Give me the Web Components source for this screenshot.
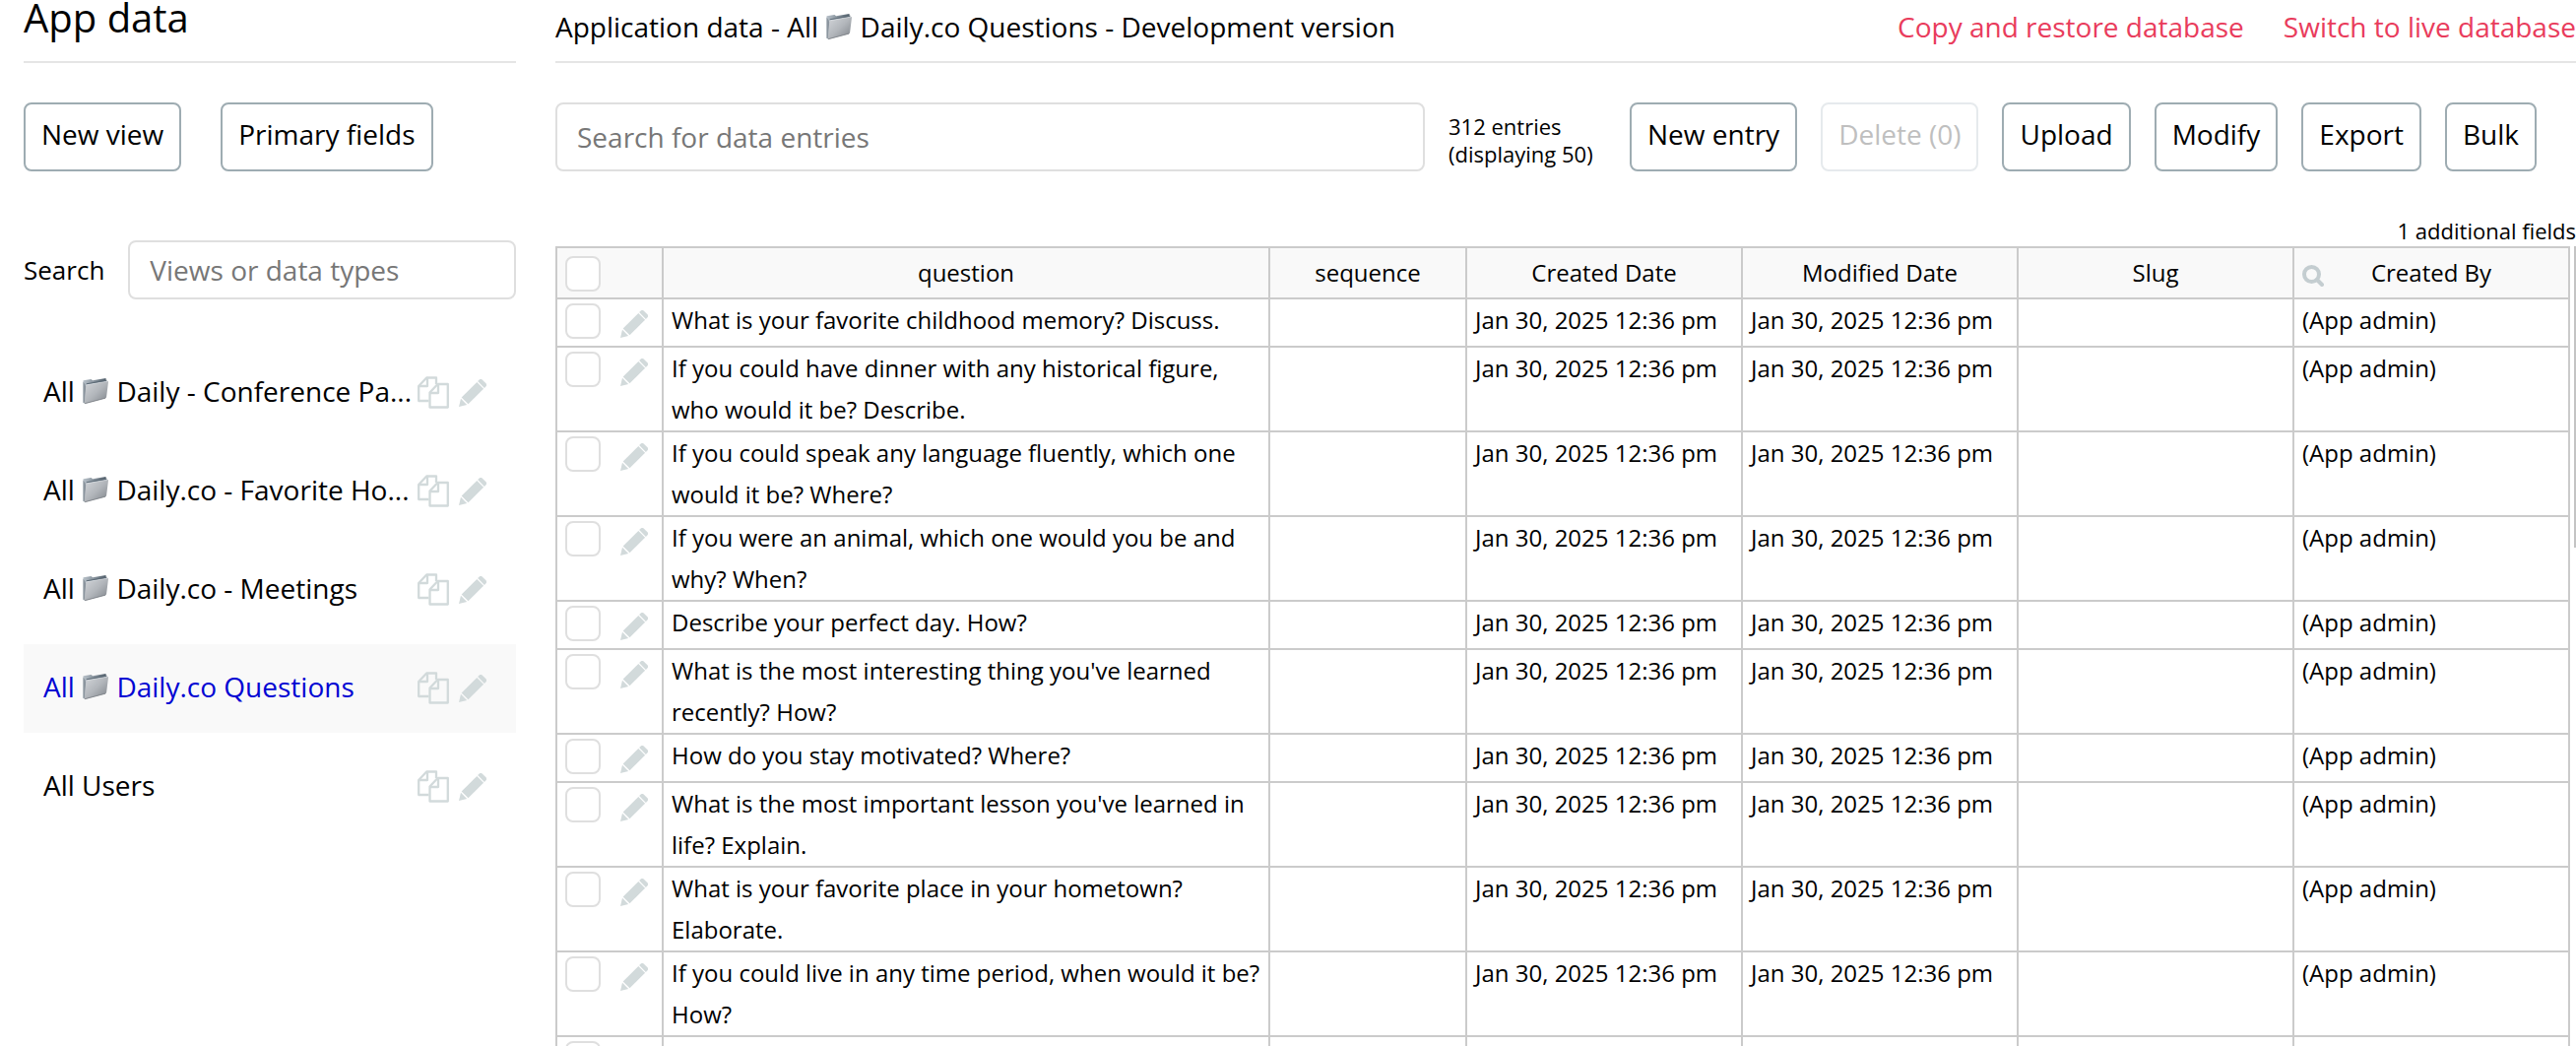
<!DOCTYPE html>
<html lang="en">
<head>
<meta charset="utf-8">
<title>App data</title>
<style>
  body { margin: 0; height: 100vh; overflow: hidden; background: #fff; color: #000; font: 28px/38px "Open Sans", "Noto Sans", sans-serif; }
</style>
</head>
<body>
<app-data></app-data>

<script>
const ICONS = {
  folder: `<svg viewBox="0 0 27 28" width="28" height="28"><defs>
    <linearGradient id="f" x1="0" y1="0" x2="1" y2="1"><stop offset="0" stop-color="#d3d6da"/><stop offset=".5" stop-color="#b2b6bb"/><stop offset="1" stop-color="#7d8288"/></linearGradient>
    <linearGradient id="b" x1="0" y1="0" x2="1" y2="0"><stop offset="0" stop-color="#b9c2ca"/><stop offset="1" stop-color="#4f5d69"/></linearGradient></defs>
    <path d="M1 3.2 9 2l1.6 1.2L24 1l.4 4L3 26.4l-2-.6Z" fill="url(#b)"/>
    <path d="M1 4.5v21.3l1.3.6L4 9Z" fill="#8b959e"/>
    <path d="M4.6 7.6 25.6 4q1-.1.9.8L24.6 20q-.1.9-1 1.2L3.2 26.8q-1 .2-.9-.8L3.8 8.5q.1-.8.8-.9Z" fill="url(#f)"/>
    <path d="M3.8 8.4q.1-.7.8-.8L25.6 4" fill="none" stroke="#dfe4e8" stroke-width=".7"/>
    <path d="M4.200 6.800 25 3.200" fill="none" stroke="#5b6975" stroke-width="1"/>
    <path d="m2.6 26.7 21-5.500" fill="none" stroke="#757a80" stroke-width=".8"/></svg>`,
  copy: `<svg viewBox="0 0 32 33" width="32" height="33" fill="none" stroke="#d2dadb" stroke-width="2.300" stroke-linejoin="round">
    <path d="M11.500 25H1.200V10l8-8.500h9.800V8"/><path d="M10 2v8H1.500"/>
    <path d="M12.500 16.500 20.500 8h10.300v23.500H12.500Z"/><path d="M21 8.500v8.500h-8"/></svg>`,
  pencil: `<svg viewBox="0 0 28 28" width="28" height="28" fill="#d2dadb">
    <path d="M0 28 2 19.800 8.200 26Z"/><path d="M2.700 18.500 18.300 2.900l6.800 6.800L9.500 25.300Z"/><path d="m19.100 2.100 1.400-1.400q1.700-1.600 3.400 0l3.400 3.400q1.600 1.700 0 3.400l-1.400 1.400Z"/></svg>`,
  search: `<svg viewBox="0 0 22 22" width="22" height="22" fill="none" stroke="#c4cdd0"><circle cx="9.500" cy="9.500" r="7.500" stroke-width="4"/><path d="m15 15 5 5" stroke-width="4" stroke-linecap="round"/></svg>`
};

const BASE = `*{box-sizing:border-box} button,input{font:inherit;color:inherit;margin:0}`;

class BaseElement extends HTMLElement {
  mount(css, html) {
    this.attachShadow({ mode: 'open' }).innerHTML = `<style>${BASE}${css}</style>${html}`;
  }
}

customElements.define('ui-icon', class extends BaseElement {
  connectedCallback() {
    this.mount(`:host{display:block} svg{display:block}`, ICONS[this.getAttribute('name')]);
  }
});

customElements.define('folder-icon', class extends BaseElement {
  connectedCallback() {
    this.mount(`:host{display:inline-block;vertical-align:-3px} svg{display:block}`, ICONS.folder);
  }
});

customElements.define('icon-button', class extends BaseElement {
  connectedCallback() {
    this.mount(`:host{display:block} button{display:block;padding:0;border:0;background:none}`,
      `<button type="button" aria-label="${this.getAttribute('label')}"><ui-icon name="${this.getAttribute('icon')}"></ui-icon></button>`);
  }
});

customElements.define('outline-button', class extends BaseElement {
  connectedCallback() {
    this.mount(`:host{display:block;flex:none}
      button{display:block;padding:11px 16px 17px;border:2px solid #9eacb2;border-radius:8px;background:#fff;white-space:nowrap}
      button:disabled{border-color:#e6eaed;color:#bfbfbf}`,
      `<button type="button" ${this.hasAttribute('disabled') ? 'disabled' : ''}><slot></slot></button>`);
  }
});

customElements.define('search-field', class extends BaseElement {
  connectedCallback() {
    const label = this.getAttribute('label');
    const text = this.getAttribute('placeholder');
    this.mount(`:host{display:flex;align-items:center;gap:24px;min-width:0}
      label{font-size:26px}
      input{flex:1;min-width:0;width:100%;height:var(--field-height,60px);padding:0 20px;border:2px solid #dfdfdf;border-radius:8px;background:#fff;outline:0}
      input::placeholder{color:#777;opacity:1}`,
      `${label ? `<label for="q">${label}</label>` : ''}<input id="q" type="text" placeholder="${text}" ${label ? '' : `aria-label="${text}"`}>`);
  }
});

customElements.define('check-box', class extends BaseElement {
  connectedCallback() {
    this.mount(`:host{display:block}
      input{appearance:none;display:block;width:36px;height:36px;border:2px solid #dfdfdf;border-radius:8px;background:#fff}`,
      `<input type="checkbox" aria-label="${this.getAttribute('label')}">`);
  }
});

customElements.define('view-item', class extends BaseElement {
  connectedCallback() {
    this.mount(`:host{display:flex;align-items:flex-start;padding:24px 30px 28px 20px}
      :host([selected]){background:#f9f9f9}
      a{flex:1;min-width:0;color:inherit;text-decoration:none;white-space:nowrap}
      :host([selected]) a{color:#0205d3}
      div{display:flex;align-items:center;gap:10px;padding-top:4px}`,
      `<a href="#"><slot></slot></a><div><icon-button icon="copy" label="Duplicate view"></icon-button><icon-button icon="pencil" label="Edit view"></icon-button></div>`);
  }
});

customElements.define('view-sidebar', class extends BaseElement {
  connectedCallback() {
    this.mount(`:host{display:block;flex:none;width:500px}
      header{height:64px;border-bottom:2px solid #e5e5e5}
      h1{margin:0;font-size:40px;line-height:36px;font-weight:400}
      .buttons{display:flex;gap:40px;padding:40px 0 70px}
      nav{display:flex;flex-direction:column;gap:10px;padding-top:50px}`,
      `<header><h1>App data</h1></header>
      <div class="buttons"><outline-button>New view</outline-button><outline-button>Primary fields</outline-button></div>
      <search-field label="Search" placeholder="Views or data types"></search-field>
      <nav>
        <view-item>All <folder-icon></folder-icon> Daily - Conference Pa...</view-item>
        <view-item>All <folder-icon></folder-icon> Daily.co - Favorite Ho...</view-item>
        <view-item>All <folder-icon></folder-icon> Daily.co - Meetings</view-item>
        <view-item selected>All <folder-icon></folder-icon> Daily.co Questions</view-item>
        <view-item>All Users</view-item>
      </nav>`);
  }
});

const QUESTIONS = [
  "What is your favorite childhood memory? Discuss.",
  "If you could have dinner with any historical figure, who would it be? Describe.",
  "If you could speak any language fluently, which one would it be? Where?",
  "If you were an animal, which one would you be and why? When?",
  "Describe your perfect day. How?",
  "What is the most interesting thing you've learned recently? How?",
  "How do you stay motivated? Where?",
  "What is the most important lesson you've learned in life? Explain.",
  "What is your favorite place in your hometown? Elaborate.",
  "If you could live in any time period, when would it be? How?"
];
const DATE = 'Jan 30, 2025 12:36 pm';

customElements.define('entry-table', class extends BaseElement {
  connectedCallback() {
    const row = q => `<tr>
      <td class="tools"><div><check-box label="Select entry"></check-box><icon-button icon="pencil" label="Edit entry"></icon-button></div></td>
      <td>${q}</td><td></td><td>${q && DATE}</td><td>${q && DATE}</td><td></td><td>${q && '(App admin)'}</td></tr>`;
    this.mount(`:host{display:flex;gap:4px;font-size:24px;line-height:42px}
      table{flex:1;width:100%;table-layout:fixed;border-collapse:collapse}
      .c-tools{width:108px}.c-seq{width:200px}.c-std{width:280px}
      th,td{border:2px solid #cbcbcb;padding:0 8px;vertical-align:top;text-align:left}
      th{padding:0 8px;background:#f9f9f9;font-weight:400;line-height:50px;text-align:center}
      td.tools div{display:flex;gap:20px;padding:4px 0 7px}
      td.tools icon-button{padding-top:7px}
      td.tools div{height:47px}
      th.tools{padding:8px 8px 0}
      .find{display:grid;grid-template-columns:1fr auto 1fr;align-items:center}
      .find ui-icon{justify-self:start;padding-top:6px}
      .scroll{width:2px;height:306px;background:#c4c4c4}`,
      `<table><colgroup><col class="c-tools"><col><col class="c-seq"><col class="c-std"><col class="c-std"><col class="c-std"><col class="c-std"></colgroup>
      <thead><tr><th class="tools"><check-box label="Select all"></check-box></th><th>question</th><th>sequence</th><th>Created Date</th><th>Modified Date</th><th>Slug</th>
      <th><div class="find"><ui-icon name="search"></ui-icon><span>Created By</span></div></th></tr></thead>
      <tbody>${QUESTIONS.map(row).join('')}${row('')}</tbody></table><div class="scroll"></div>`);
  }
});

customElements.define('data-panel', class extends BaseElement {
  connectedCallback() {
    this.mount(`:host{display:block;flex:1;min-width:0}
      header{display:flex;gap:40px;height:64px;padding-top:8px;border-bottom:2px solid #e5e5e5}
      h2{flex:1;margin:0;font-size:28px;font-weight:400;white-space:nowrap}
      a{color:#e93c5c;text-decoration:none;white-space:nowrap}
      .bar{display:flex;align-items:center;gap:24px;padding:40px 40px 46px 0}
      .bar search-field{flex:1;--field-height:70px}
      .count{width:160px;padding-top:6px;font-size:22px;line-height:28px}
      .extra{padding-bottom:2px;font-size:22px;line-height:28px;text-align:right}`,
      `<header><h2>Application data - All <folder-icon></folder-icon> Daily.co Questions - Development version</h2>
        <a href="#">Copy and restore database</a><a href="#">Switch to live database</a></header>
      <div class="bar"><search-field placeholder="Search for data entries"></search-field>
        <div class="count">312 entries<br>(displaying 50)</div>
        <outline-button>New entry</outline-button><outline-button disabled>Delete (0)</outline-button><outline-button>Upload</outline-button>
        <outline-button>Modify</outline-button><outline-button>Export</outline-button><outline-button>Bulk</outline-button></div>
      <div class="extra">1 additional fields</div>
      <entry-table></entry-table>`);
  }
});

customElements.define('app-data', class extends BaseElement {
  connectedCallback() {
    this.mount(`:host{display:flex;gap:40px;padding-left:24px}`, `<view-sidebar></view-sidebar><data-panel></data-panel>`);
  }
});
</script>
</body>
</html>
